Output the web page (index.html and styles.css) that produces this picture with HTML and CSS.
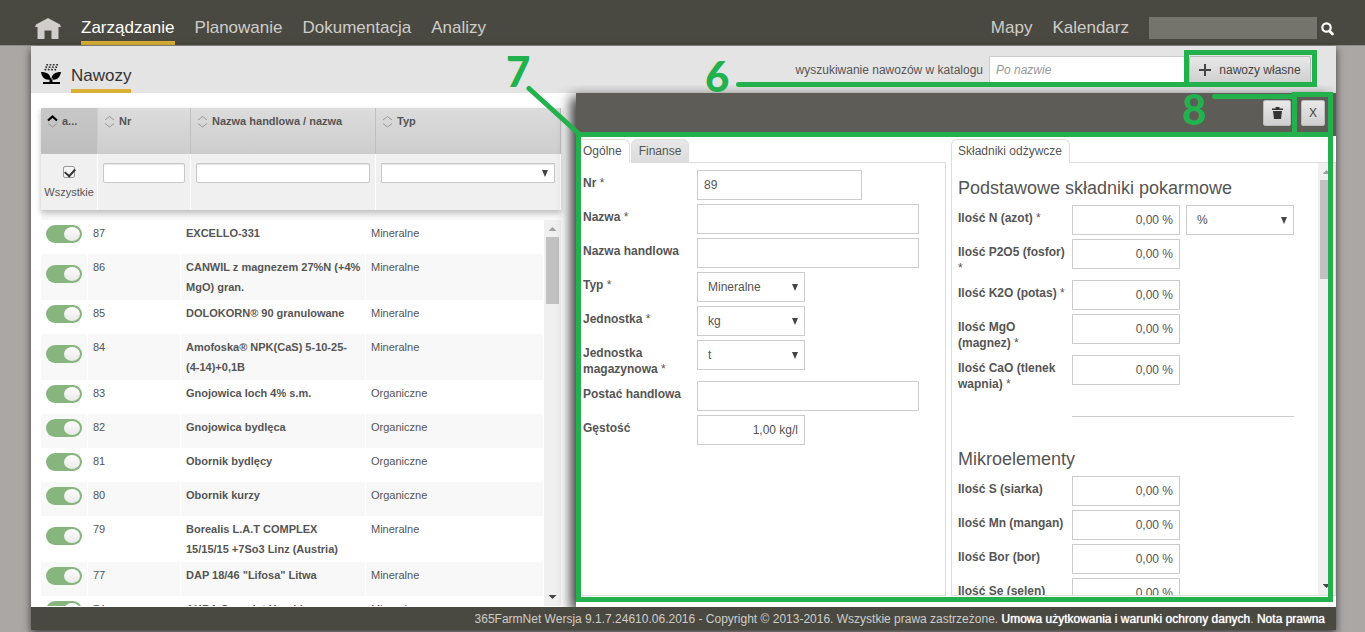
FILE: index.html
```html
<!DOCTYPE html>
<html lang="pl">
<head>
<meta charset="utf-8">
<title>Nawozy</title>
<link rel="stylesheet" href="styles.css">
</head>
<body>
<header class="topbar">
  <a class="home" href="#" aria-label="Start"><svg width="26" height="21" viewBox="0 0 26 21"><path fill="#d0cdcb" d="M13 0 25 6.500 26 9H23.500V21H16.500V12.500H9.500V21H2.500V9H0L1 6.500Z"/></svg></a>
  <nav class="nav">
    <a class="nav-link nav-active" href="#">Zarządzanie</a>
    <a class="nav-link" href="#">Planowanie</a>
    <a class="nav-link" href="#">Dokumentacja</a>
    <a class="nav-link" href="#">Analizy</a>
  </nav>
  <nav class="nav nav-right">
    <a class="nav-link" href="#">Mapy</a>
    <a class="nav-link" href="#">Kalendarz</a>
  </nav>
  <input class="top-search" type="text" aria-label="Szukaj">
  <button class="top-go" aria-label="Szukaj"><svg width="13" height="14" viewBox="0 0 13 14"><circle cx="5.500" cy="5.500" r="4.200" fill="none" stroke="#fff" stroke-width="2.200"/><path d="M8.500 9 11.500 12" stroke="#fff" stroke-width="2.600" stroke-linecap="round"/></svg></button>
</header>

<div class="page">
  <div class="titlebar">
    <svg class="sprout" width="20" height="20" viewBox="0 0 20 20"><path d="M6.500 0 4 6.500M9.800 0 7.300 6.500M13.100 0 10.600 6.500M16.400 0 13.900 6.500" stroke="#333" stroke-width="1.800" stroke-dasharray="1.600 1"/><path d="M0 8C6 8 9.500 10 9.600 15.500 4 16.500 1 13.500 0 8Z M20 8C14 8 10.700 10 10.400 15.500 16 16.500 19 13.500 20 8Z M8.500 14h3v4.500H8.500Z M2 18h17v2H2Z"/></svg>
    <h1 class="title">Nawozy</h1>
    <label class="catalog-label" for="catalog">wyszukiwanie nawozów w katalogu</label>
    <input class="catalog-input" id="catalog" type="text" placeholder="Po nazwie">
    <button class="btn btn-own"><svg width="12" height="12" viewBox="0 0 12 12"><path d="M6 0V12M0 6H12" stroke="#444" stroke-width="2"/></svg>nawozy własne</button>
  </div>

  <main class="content">
    <section class="list">
      <table class="grid grid-head">
        <colgroup><col class="h-active"><col class="c-nr"><col class="c-name"><col></colgroup>
        <thead>
          <tr class="heads">
            <th class="sorted"><svg class="sort" width="11" height="13" viewBox="0 0 11 13"><path d="M1 5.500 5.500 1.500 10 5.500" stroke="#000" stroke-width="2.200" fill="none"/><path d="M1 8.500 5.500 12 10 8.500" stroke="#999" fill="none"/></svg>a...</th>
            <th><svg class="sort" width="11" height="13" viewBox="0 0 11 13"><path d="M1 5 5.500 1.500 10 5M1 8.500 5.500 12 10 8.500" stroke="#999" fill="none"/></svg>Nr</th>
            <th><svg class="sort" width="11" height="13" viewBox="0 0 11 13"><path d="M1 5 5.500 1.500 10 5M1 8.500 5.500 12 10 8.500" stroke="#999" fill="none"/></svg>Nazwa handlowa / nazwa</th>
            <th><svg class="sort" width="11" height="13" viewBox="0 0 11 13"><path d="M1 5 5.500 1.500 10 5M1 8.500 5.500 12 10 8.500" stroke="#999" fill="none"/></svg>Typ</th>
          </tr>
          <tr class="filters">
            <td class="all"><input class="tick" type="checkbox" id="all" checked><label for="all">Wszystkie</label></td>
            <td><input class="filter" type="text" aria-label="Nr"></td>
            <td><input class="filter" type="text" aria-label="Nazwa"></td>
            <td><span class="pick pick-filter"><select class="filter filter-select" aria-label="Typ"><option></option></select></span></td>
          </tr>
        </thead>
      </table>
      <div class="scroller">
        <div class="rows">
          <table class="grid grid-body">
            <colgroup><col class="c-active"><col class="c-nr"><col class="c-name"><col></colgroup>
            <tbody>
              <tr><td class="sw"><input class="toggle" type="checkbox" checked aria-label="87"></td><td>87</td><td class="name">EXCELLO-331</td><td>Mineralne</td></tr>
              <tr><td class="sw"><input class="toggle" type="checkbox" checked aria-label="86"></td><td>86</td><td class="name">CANWIL z magnezem 27%N (+4% MgO) gran.</td><td>Mineralne</td></tr>
              <tr><td class="sw"><input class="toggle" type="checkbox" checked aria-label="85"></td><td>85</td><td class="name">DOLOKORN® 90 granulowane</td><td>Mineralne</td></tr>
              <tr><td class="sw"><input class="toggle" type="checkbox" checked aria-label="84"></td><td>84</td><td class="name">Amofoska® NPK(CaS) 5-10-25-<span class="keep">(4-14)+0,1B</span></td><td>Mineralne</td></tr>
              <tr><td class="sw"><input class="toggle" type="checkbox" checked aria-label="83"></td><td>83</td><td class="name">Gnojowica loch 4% s.m.</td><td>Organiczne</td></tr>
              <tr><td class="sw"><input class="toggle" type="checkbox" checked aria-label="82"></td><td>82</td><td class="name">Gnojowica bydlęca</td><td>Organiczne</td></tr>
              <tr><td class="sw"><input class="toggle" type="checkbox" checked aria-label="81"></td><td>81</td><td class="name">Obornik bydlęcy</td><td>Organiczne</td></tr>
              <tr><td class="sw"><input class="toggle" type="checkbox" checked aria-label="80"></td><td>80</td><td class="name">Obornik kurzy</td><td>Organiczne</td></tr>
              <tr><td class="sw"><input class="toggle" type="checkbox" checked aria-label="79"></td><td>79</td><td class="name">Borealis L.A.T COMPLEX 15/15/15 +7So3 Linz (Austria)</td><td>Mineralne</td></tr>
              <tr><td class="sw"><input class="toggle" type="checkbox" checked aria-label="77"></td><td>77</td><td class="name">DAP 18/46 "Lifosa" Litwa</td><td>Mineralne</td></tr>
              <tr><td class="sw"><input class="toggle" type="checkbox" checked aria-label="74"></td><td>74</td><td class="name">AKRA Granulat Kombi</td><td>Mineralne</td></tr>
            </tbody>
          </table>
        </div>
        <div class="bar bar-list"><i class="up"></i><i class="thumb"></i><i class="down"></i></div>
      </div>
    </section>

    <section class="panel">
      <div class="panel-head">
        <button class="btn btn-trash" aria-label="Usuń"><svg width="11" height="12" viewBox="0 0 11 12"><path fill="#333" d="M0 1.500H3.500V0H7.500V1.500H11V3H0ZM1 4H10L9 12H2Z"/></svg></button>
        <button class="btn btn-x">X</button>
      </div>
      <div class="panel-cols">
        <div class="col">
          <div class="tabs"><button class="tab tab-on">Ogólne</button><button class="tab">Finanse</button></div>
          <form class="sheet sheet-main">
            <div class="row"><label for="nr">Nr <span>*</span></label><input class="box w-m" id="nr" value="89"></div>
            <div class="row"><label for="nazwa">Nazwa <span>*</span></label><input class="box w-l" id="nazwa"></div>
            <div class="row"><label for="handl">Nazwa handlowa</label><input class="box w-l" id="handl"></div>
            <div class="row"><label for="typ">Typ <span>*</span></label><span class="pick"><select class="box w-s" id="typ"><option>Mineralne</option></select></span></div>
            <div class="row"><label for="jedn">Jednostka <span>*</span></label><span class="pick"><select class="box w-s" id="jedn"><option>kg</option></select></span></div>
            <div class="row"><label for="mag">Jednostka magazynowa <span>*</span></label><span class="pick"><select class="box w-s" id="mag"><option>t</option></select></span></div>
            <div class="row"><label for="postac">Postać handlowa</label><input class="box w-l" id="postac"></div>
            <div class="row"><label for="gest">Gęstość</label><input class="box w-s num" id="gest" value="1,00 kg/l"></div>
          </form>
        </div>
        <div class="col">
          <div class="tabs"><button class="tab tab-on tab-first">Składniki odżywcze</button></div>
          <div class="sheet sheet-scroll">
            <form class="nutrients">
              <h2 class="group">Podstawowe składniki pokarmowe</h2>
              <div class="row"><label for="n">Ilość N (azot) <span>*</span></label><input class="box w-s num" id="n" value="0,00 %"><span class="pick pick-unit"><select class="box w-s" aria-label="Jednostka"><option>%</option></select></span></div>
              <div class="row"><label for="p">Ilość P2O5 (fosfor) <span>*</span></label><input class="box w-s num" id="p" value="0,00 %"></div>
              <div class="row"><label for="k">Ilość K2O (potas) <span>*</span></label><input class="box w-s num" id="k" value="0,00 %"></div>
              <div class="row"><label for="mg">Ilość MgO (magnez) <span>*</span></label><input class="box w-s num" id="mg" value="0,00 %"></div>
              <div class="row"><label for="ca">Ilość CaO (tlenek wapnia) <span>*</span></label><input class="box w-s num" id="ca" value="0,00 %"></div>
              <hr class="rule">
              <h2 class="group">Mikroelementy</h2>
              <div class="row"><label for="s">Ilość S (siarka)</label><input class="box w-s num" id="s" value="0,00 %"></div>
              <div class="row"><label for="mn">Ilość Mn (mangan)</label><input class="box w-s num" id="mn" value="0,00 %"></div>
              <div class="row"><label for="bor">Ilość Bor (bor)</label><input class="box w-s num" id="bor" value="0,00 %"></div>
              <div class="row"><label for="se">Ilość Se (selen)</label><input class="box w-s num" id="se" value="0,00 %"></div>
            </form>
            <div class="bar bar-panel"><i class="up"></i><i class="thumb"></i><i class="down"></i></div>
          </div>
        </div>
      </div>
    </section>
  </main>

  <footer class="footer">365FarmNet Wersja 9.1.7.24610.06.2016 - Copyright © 2013-2016. Wszystkie prawa zastrzeżone. <a href="#">Umowa użytkowania i warunki ochrony danych</a>. <a href="#">Nota prawna</a></footer>
</div>

<svg class="callouts" width="1365" height="632" viewBox="0 0 1365 632">
  <g fill="none" stroke="#22b14c" stroke-width="5">
    <path d="M578.500 134.500H1330.500V599.500H578.500Z"/>
    <path d="M1186.500 52.500H1314.500V84.500H1186.500Z"/>
    <path d="M1294.500 94.500H1330.500V134.500H1294.500Z"/>
    <path stroke-linecap="round" d="M738.500 84.500H1186M1214.500 96.500H1294M529 88.500 578 133"/>
  </g>
  <g class="callout-digit">
    <text x="506" y="87">7</text>
    <text x="705" y="92">6</text>
    <text x="1182" y="125">8</text>
  </g>
</svg>
</body>
</html>
```
FILE: styles.css
```css
* { box-sizing: border-box; }
body {
  margin: 0;
  height: 100vh;
  display: flex;
  flex-direction: column;
  overflow: hidden;
  position: relative;
  background: #aba7a5;
  color: #555;
  font: 12px/16px "Liberation Sans", Arial, sans-serif;
}
input, select, button { font: inherit; color: inherit; margin: 0; border-radius: 0; }
a { color: inherit; text-decoration: none; }

.topbar {
  flex: none;
  height: 46px;
  padding: 0 31px 0 35px;
  display: flex;
  align-items: center;
  background: #4a4941;
  border-bottom: 1px solid #8f8d88;
}
.home { height: 21px; margin: 12px 20px 0 0; }
.home svg { display: block; }
.nav { display: flex; gap: 20px; align-self: stretch; }
.nav-link {
  padding-top: 18px;
  font-size: 17px;
  line-height: 20px;
  color: #cfcdc9;
}
.nav-active { color: #fff; border-bottom: 4px solid #dab135; }
.nav-right { margin-left: auto; }
.top-search {
  width: 168px;
  height: 22px;
  margin: 10px 4px 0 20px;
  border: 0;
  background: #75746c;
}
.top-go { margin-top: 12px; padding: 0; border: 0; background: none; height: 14px; }
.top-go svg { display: block; }

.page {
  flex: 1;
  min-height: 0;
  margin: 0 29px 2px 31px;
  display: flex;
  flex-direction: column;
  background: #fff;
  box-shadow: 0 3px 8px rgba(0, 0, 0, .65);
}
.titlebar {
  flex: none;
  height: 47px;
  padding: 0 25px 0 10px;
  display: flex;
  align-items: center;
  background: #e4e4e4;
}
.sprout { margin: 8px 10px 0 0; }
.title {
  align-self: stretch;
  margin: 0 auto 0 0;
  padding-top: 20px;
  border-bottom: 4px solid #dab135;
  color: #333;
  font-weight: normal;
  font-size: 17px;
  line-height: 20px;
}
.catalog-label { margin-right: 6px; }
.catalog-input {
  width: 200px;
  height: 28px;
  padding: 0 6px;
  border: 1px solid #ccc;
  background: #fff;
}
.catalog-input::placeholder { color: #999; font-style: italic; }
.btn {
  display: flex;
  align-items: center;
  justify-content: center;
  padding: 0;
  border: 1px solid #bbb;
  border-radius: 2px;
  background: linear-gradient(#e8e8e8, #cfcfcf);
  color: #444;
}
.btn-own { width: 122px; height: 28px; gap: 8px; }

.content {
  flex: 1;
  min-height: 0;
  display: grid;
  grid-template-columns: 545fr 760fr;
  grid-template-rows: minmax(0, 1fr);
}
.list {
  min-width: 0;
  padding: 15px 15px 1px 10px;
  display: flex;
  flex-direction: column;
}
.grid {
  width: 100%;
  table-layout: fixed;
  border-collapse: separate;
  border-spacing: 0;
  font-size: 11px;
  line-height: 20px;
}
.h-active { width: 57px; }
.c-active { width: 47px; }
.c-nr { width: 93px; }
.c-name { width: 185px; }
.grid-head { flex: none; position: relative; box-shadow: 0 3px 6px rgba(0, 0, 0, .25); }
.heads th {
  height: 46px;
  padding: 3px 6px;
  text-align: left;
  vertical-align: top;
  white-space: nowrap;
  background: linear-gradient(#dcdcdc, #cdcdcd);
  border-right: 1px solid #bfbfbf;
}
.heads .sorted { background: linear-gradient(#c8c8c8, #bebebe); border-right-color: #ccc; }
.sort { margin-right: 4px; vertical-align: -3px; }
.filters td {
  height: 56px;
  padding: 9px 5px 0;
  vertical-align: top;
  background: #f0f0f0;
  border-right: 1px solid #fff;
}
.filters .all { padding: 12px 3px 0; text-align: center; }
.all label { display: block; margin-top: 4px; white-space: nowrap; }
.tick {
  appearance: none;
  display: block;
  width: 12px;
  height: 12px;
  margin: 0 auto;
  border: 1px solid #999;
  border-radius: 2px;
  background: #f4f4f4;
}
.tick:checked::before {
  content: "";
  display: block;
  width: 8px;
  height: 5px;
  margin: 1px;
  border: solid #333;
  border-width: 0 0 2px 2px;
  transform: rotate(-48deg);
}
.filter {
  display: block;
  width: 100%;
  height: 20px;
  border: 1px solid #c8c8c8;
  border-radius: 2px;
  background: #fff;
  box-shadow: inset 0 1px 1px rgba(0, 0, 0, .1);
}
.filter-select { appearance: none; border-radius: 0; }
.pick { position: relative; display: block; }
.pick::after {
  content: "";
  position: absolute;
  right: 7px;
  top: 50%;
  margin-top: -3px;
  width: 6px;
  height: 7px;
  background: #444;
  clip-path: polygon(0 0, 100% 0, 50% 100%);
  pointer-events: none;
}

.scroller { flex: 1; min-height: 0; display: flex; padding-top: 10px; background: #f8f8f8; }
.rows { flex: 1; min-width: 0; overflow: hidden; background: #fff; }
.grid-body td { padding: 3px 5px; vertical-align: top; border-right: 1px solid #fff; }
.grid-body tr:nth-child(even) td { background: #f8f8f8; }
.grid-body .name { padding-right: 2px; font-weight: bold; }
.keep { display: inline-block; }
.grid-body .sw { padding: 5px 5px 11px; vertical-align: middle; }
.toggle {
  appearance: none;
  display: block;
  width: 36px;
  height: 18px;
  padding-top: 2px;
  border-radius: 9px;
  background: #87b57e;
}
.toggle::before {
  content: "";
  display: block;
  width: 16px;
  height: 14px;
  margin-left: 18px;
  border-radius: 50%;
  background: linear-gradient(#fff, #e8e8e8);
}

.bar {
  flex: none;
  width: 17px;
  padding: 7px 2px;
  display: flex;
  flex-direction: column;
  align-items: center;
  background: #f0f0f0;
}
.up, .down { width: 8px; height: 4px; background: #a0a0a0; clip-path: polygon(50% 0, 100% 100%, 0 100%); }
.down { margin-top: auto; background: #444; clip-path: polygon(0 0, 100% 0, 50% 100%); }
.thumb { width: 13px; margin-top: 6px; background: #c1c1c1; }
.bar-list .thumb { height: 67px; }
.bar-panel .thumb { height: 99px; }

.panel {
  position: relative;
  min-width: 0;
  padding-bottom: 11px;
  display: flex;
  flex-direction: column;
  background: #fff;
  box-shadow: -5px 4px 12px rgba(0, 0, 0, .8);
  clip-path: inset(-8px 0 0 -20px);
}
.panel-head {
  flex: none;
  height: 43px;
  padding: 7px 11px 0 0;
  display: flex;
  justify-content: flex-end;
  gap: 10px;
  background: #5d5c56;
}
.btn-trash { width: 28px; height: 26px; }
.btn-x { width: 24px; height: 26px; }
.panel-cols {
  flex: 1;
  min-height: 0;
  display: grid;
  grid-template-columns: 370fr 385fr;
  grid-template-rows: minmax(0, 1fr);
  gap: 5px;
}
.col { min-width: 0; display: flex; flex-direction: column; }
.tabs { flex: none; display: flex; gap: 1px; padding-top: 3px; height: 27px; margin-bottom: -1px; }
.tab {
  height: 24px;
  padding: 0 7px;
  border: 1px solid #ddd;
  border-radius: 6px 6px 0 0;
  background: linear-gradient(#e8e8e8, #dcdcdc);
}
.tab-on { position: relative; background: #fff; border-bottom-color: #fff; border-left-width: 0; border-top-left-radius: 0; }
.tab-first { border-left-width: 1px; padding-left: 6px; border-top-left-radius: 6px; }
.sheet { flex: 1; min-height: 0; overflow: hidden; border: 1px solid #ddd; }
.sheet-main { padding: 7px 0 0 7px; border-left: 0; }
.sheet-scroll { display: flex; }
.nutrients { flex: 1; min-width: 0; padding: 13px 0 0 6px; overflow: hidden; }
.group { margin: 0 0 5px; font-weight: normal; font-size: 18px; line-height: 24px; }
.row { display: flex; align-items: flex-start; margin-bottom: 4px; }
.row label { flex: none; width: 114px; padding: 5px 4px 0 0; font-weight: bold; }
.row label span { font-weight: normal; }
.box {
  display: block;
  height: 30px;
  padding: 0 6px;
  border: 1px solid #ccc;
  background: #fff;
}
select.box { appearance: none; padding: 0 10px; }
.w-s { width: 108px; }
.w-m { width: 165px; }
.w-l { width: 222px; }
.num { text-align: right; }
.pick-unit { margin-left: 6px; }
.rule { width: 222px; margin: 24px 0 30px 114px; border: 0; border-top: 1px solid #ccc; }

.footer {
  flex: none;
  height: 23px;
  padding: 1px 11px 0;
  text-align: right;
  line-height: 22px;
  white-space: nowrap;
  background: #4a4941;
  color: #cfcdc9;
}
.footer a { color: #fff; text-shadow: 0 0 1px #fff; }

.callouts { position: absolute; left: 0; top: 0; pointer-events: none; }
.callout-digit { fill: #22b14c; font-family: Lato, sans-serif; font-weight: 900; font-size: 42px; }
```
